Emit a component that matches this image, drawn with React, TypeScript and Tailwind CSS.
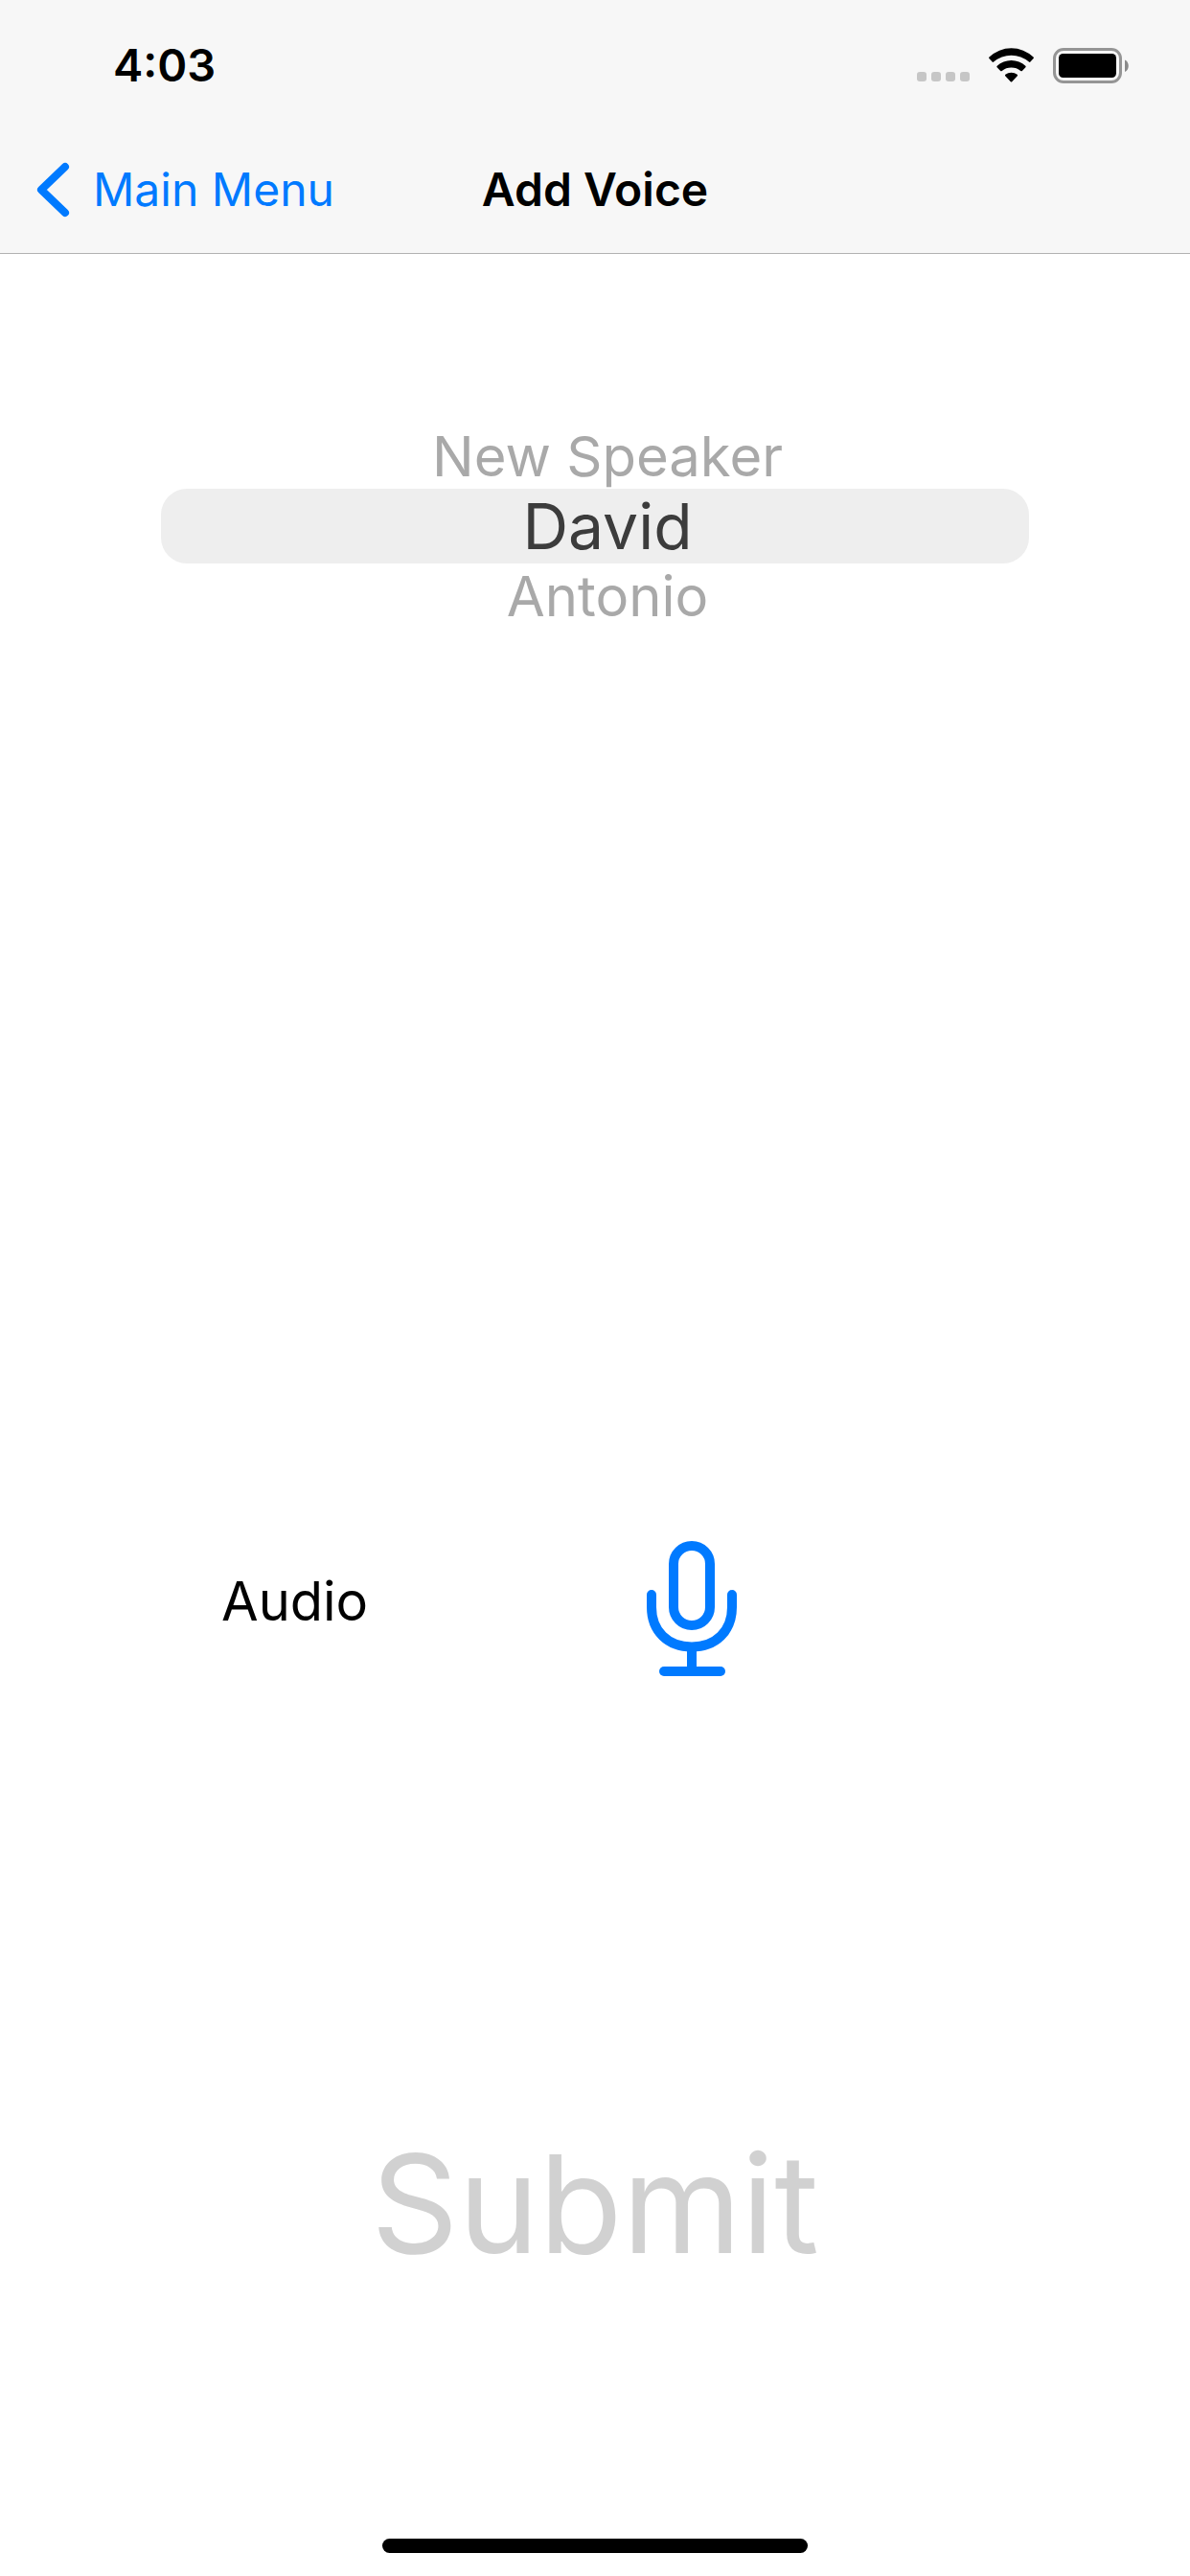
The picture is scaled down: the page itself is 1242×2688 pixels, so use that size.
import { useState } from "react";

const speakers = ["New Speaker", "David", "Antonio"];

function WifiIcon() {
  return (
    <svg width="47" height="36" viewBox="0 0 47 36" aria-hidden="true">
      <path d="M.5 9.6A33 33 0 0 1 46.5 9.6Q47.300 10.300 46.600 11.100L43.400 14.600Q42.700 15.300 41.900 14.600A28 28 0 0 0 5.100 14.600Q4.300 15.300 3.600 14.600L.4 11.100Q-.3 10.300 .5 9.600Z" />
      <path d="M8.700 18.800A21.500 21.500 0 0 1 38.300 18.800Q39.100 19.500 38.400 20.300L34.800 24Q34.100 24.600 33.300 24A15.500 15.500 0 0 0 13.700 24Q12.900 24.600 12.200 24L8.600 20.300Q7.900 19.500 8.700 18.800Z" />
      <path d="M17.300 27.800A10 10 0 0 1 29.700 27.800Q30.400 28.500 29.800 29.200L24.200 35.200Q23.500 36 22.800 35.200L17.200 29.200Q16.600 28.500 17.300 27.800Z" />
    </svg>
  );
}

function BatteryIcon() {
  return (
    <svg width="79" height="37" viewBox="0 0 79 37" aria-hidden="true">
      <rect x="1.500" y="1.500" width="69" height="34" rx="9.500" fill="none" stroke="#959595" strokeWidth="3" />
      <rect x="6" y="6" width="60" height="25" rx="4.500" />
      <path d="M75 12.500C80 14.500 80 23 75 25Z" fill="#8a8a8a" />
    </svg>
  );
}

function StatusBar() {
  return (
    <div className="flex h-[132px] items-center justify-between pt-1 pr-16 pl-[118px]">
      <span className="text-[47px] leading-[60px] font-semibold">4:03</span>
      <div className="flex items-center gap-5">
        <div className="flex gap-[5px] pt-6">
          <span className="size-[10px] rounded-[3px] bg-[#c6c6c6]" />
          <span className="size-[10px] rounded-[3px] bg-[#c6c6c6]" />
          <span className="size-[10px] rounded-[3px] bg-[#c6c6c6]" />
          <span className="size-[10px] rounded-[3px] bg-[#c6c6c6]" />
        </div>
        <WifiIcon />
        <BatteryIcon />
      </div>
    </div>
  );
}

function MicIcon() {
  return (
    <svg width="94" height="141" viewBox="0 0 94 141" fill="none" stroke="currentColor" strokeWidth="10" aria-hidden="true">
      <rect x="28" y="5" width="38" height="83" rx="19" />
      <path d="M5 56V69C5 94 22 110.500 47 110.500S89 94 89 69V56" strokeLinecap="round" />
      <path d="M47 110V134" />
      <path d="M18 136H77" strokeLinecap="round" />
    </svg>
  );
}

export default function App() {
  const [selected, setSelected] = useState("David");

  return (
    <div className="flex min-h-screen flex-col bg-white font-['Inter',sans-serif] text-black">
      <header className="border-b border-[#b2b2b2] bg-[#f7f7f7]">
        <StatusBar />
        <nav className="grid h-[132px] grid-cols-[1fr_auto_1fr] items-center px-[38px]">
          <button type="button" className="flex items-center gap-6 justify-self-start text-[#007aff]">
            <svg width="35" height="58" viewBox="0 0 35 58" fill="none" stroke="currentColor" strokeWidth="8" strokeLinecap="round" strokeLinejoin="round" aria-hidden="true">
              <path d="M30 5L5 29L30 53" />
            </svg>
            <span className="text-[48px] leading-[60px]">Main Menu</span>
          </button>
          <h1 className="text-[48px] leading-[60px] font-semibold">Add Voice</h1>
        </nav>
      </header>

      <main className="flex flex-1 flex-col">
        <div role="listbox" aria-label="Speaker" className="mx-42 mt-[177px] flex flex-col">
          {speakers.map((name) => (
            <button
              key={name}
              type="button"
              role="option"
              aria-selected={name === selected}
              onClick={() => setSelected(name)}
              className={
                name === selected
                  ? "h-[78px] rounded-[27px] bg-[#eeeeee] pl-[26px] text-[66px] leading-[78px] text-[#3c3c3c]"
                  : "h-[68px] pl-[26px] text-[58px] leading-[68px] text-[#a9a9a9]"
              }
            >
              {name}
            </button>
          ))}
        </div>

        <div className="mt-auto flex items-center pl-[231px]">
          <label htmlFor="record" className="w-[444px] pb-4 text-[56px] leading-[72px]">Audio</label>
          <button id="record" type="button" aria-label="Record audio" className="text-[#007aff]">
            <MicIcon />
          </button>
        </div>

        <button type="button" disabled className="mt-[460px] mb-[260px] self-center text-[142px] leading-[180px] text-[#d1d1d1]">
          Submit
        </button>
      </main>

      <div className="mb-6 h-[15px] w-[444px] self-center rounded-full bg-black" />
    </div>
  );
}
